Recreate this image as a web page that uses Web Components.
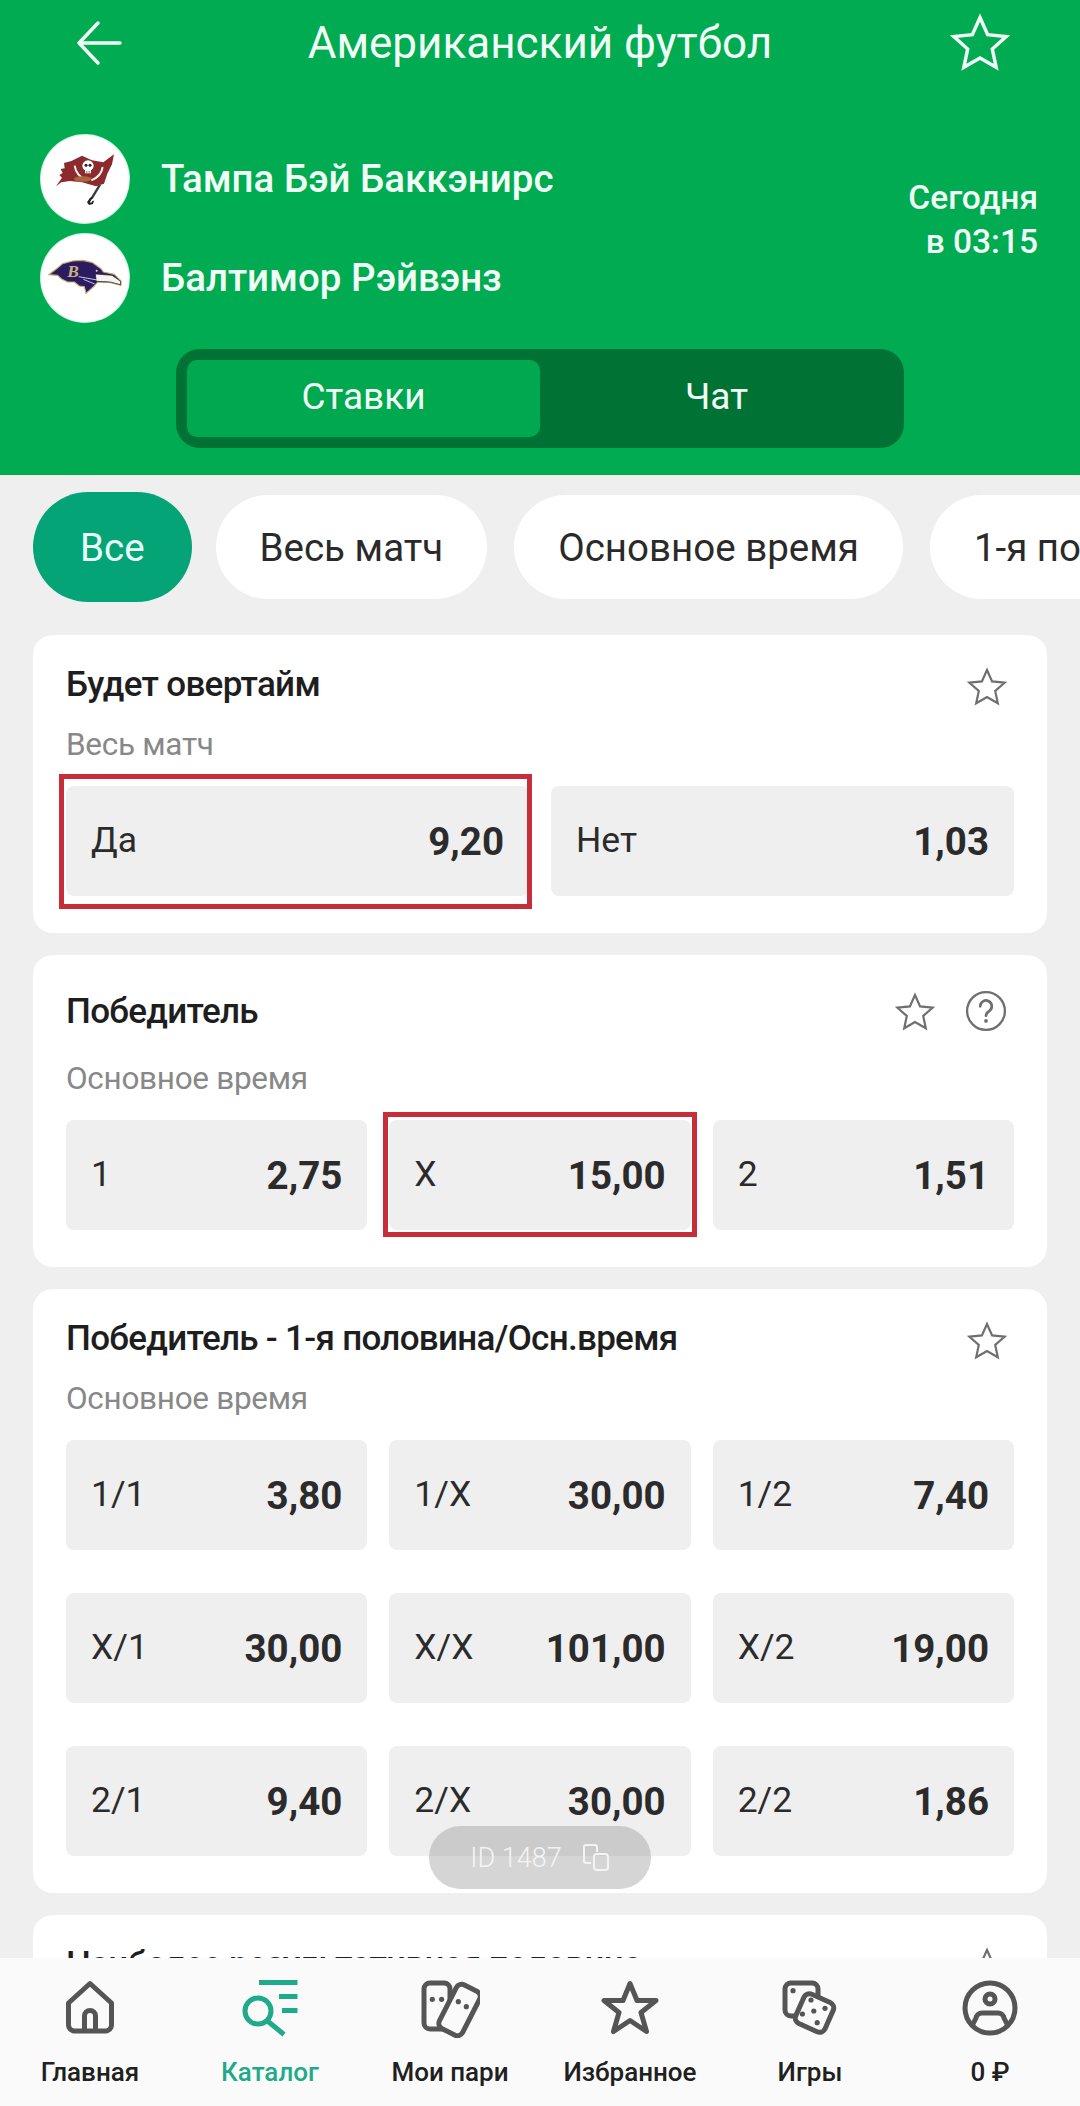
<!DOCTYPE html>
<html lang="ru">
<head>
<meta charset="utf-8">
<title>Американский футбол</title>
<style>
  html, body { margin: 0; padding: 0; }
  body {
    width: 1080px;
    height: 2106px;
    overflow: hidden;
    background: #efefef;
    font-family: Roboto, "Liberation Sans", sans-serif;
    color: #222;
  }
</style>
</head>
<body>

<app-shell>
  <match-header>
    <team-row name="Тампа Бэй Баккэнирс">
      <svg slot="logo" width="88" height="88" viewBox="5 14 264 264">
        <path d="M182 163L157 204" stroke="#3b3b3b" stroke-width="7" fill="none"/>
        <path d="M160 200l-8 2-9 14 6 8 12-3 3-10-4 0-5 7-3-3 8-12z" fill="#222"/>
        <path d="M50 168l18-26-8-8 10-6-6-12 12-2-2-16 22-6 32-16 30 14 34 6 32-24-6 30-14 28-10 30-24 8-42-12-36-4-26 4z" fill="#8c2a2e"/>
        <path d="M106 106q4 30 36 44M190 110q-4 28-34 40" stroke="#f4f0ea" stroke-width="6" fill="none"/>
        <ellipse cx="130" cy="146" rx="26" ry="8" fill="#a9673f"/>
        <ellipse cx="146" cy="106" rx="17" ry="16" fill="#fff"/>
        <rect x="137" y="118" width="18" height="11" fill="#fff"/>
        <circle cx="140" cy="105" r="4.500" fill="#222"/>
        <circle cx="152" cy="105" r="4.500" fill="#222"/>
        <path d="M141 122v7M146 122v7M151 122v7" stroke="#333" stroke-width="1.500"/>
      </svg>
    </team-row>
    <team-row name="Балтимор Рэйвэнз">
      <svg slot="logo" width="88" height="88" viewBox="5 14 264 264">
        <path d="M28 136l22-16 20-17 30-8 30-2 30 7 25 18 7 10 33 7 20 20v13l-30-8-40-2-10 12-25 22-5-20-15-2-15-12-20 0-17-8-13-12z" fill="#2b1b63" stroke="#c4a86c" stroke-width="3.500" stroke-linejoin="round"/>
        <path d="M168 134l50 4 26 18-1 10-30-8-42-2z" fill="#f4f4f4" stroke="#1a1a1a" stroke-width="2"/>
        <path d="M118 142l56 10M132 150l34 14" stroke="#e9e9f2" stroke-width="2.500" fill="none"/>
        <circle cx="172" cy="124" r="3" fill="#ddd"/>
        <text x="84" y="142" font-family="Liberation Serif, serif" font-style="italic" font-weight="700" font-size="52" fill="#c9b27c">B</text>
      </svg>
    </team-row>
  </match-header>

  <scroll-area>
    <filter-chips>
      <filter-chip active>Все</filter-chip>
      <filter-chip>Весь матч</filter-chip>
      <filter-chip>Основное время</filter-chip>
      <filter-chip>1-я половина</filter-chip>
    </filter-chips>

    <market-card title="Будет овертайм" sub="Весь матч" cols="2">
      <odd-button label="Да" value="9,20" marked style="--frame: -12px -3px -13px -7px"></odd-button>
      <odd-button label="Нет" value="1,03"></odd-button>
    </market-card>

    <market-card title="Победитель" sub="Основное время" cols="3" help>
      <odd-button label="1" value="2,75"></odd-button>
      <odd-button label="X" value="15,00" marked style="--frame: -8px -6px -7px -6px"></odd-button>
      <odd-button label="2" value="1,51"></odd-button>
    </market-card>

    <market-card title="Победитель - 1-я половина/Осн.время" sub="Основное время" cols="3">
      <odd-button label="1/1" value="3,80"></odd-button>
      <odd-button label="1/X" value="30,00"></odd-button>
      <odd-button label="1/2" value="7,40"></odd-button>
      <odd-button label="X/1" value="30,00"></odd-button>
      <odd-button label="X/X" value="101,00"></odd-button>
      <odd-button label="X/2" value="19,00"></odd-button>
      <odd-button label="2/1" value="9,40"></odd-button>
      <odd-button label="2/X" value="30,00"></odd-button>
      <odd-button label="2/2" value="1,86"></odd-button>
    </market-card>

    <market-card title="Наиболее результативная половина" sub="Основное время" cols="3"></market-card>

    <id-pill>ID 1487</id-pill>
  </scroll-area>

  <tab-bar>
    <tab-item>
      <svg slot="icon" viewBox="0 0 60 60"><path d="M30 5.500L51.500 25V47a6 6 0 0 1-6 6H14.500a6 6 0 0 1-6-6V25z"/><path d="M24.500 53V38a5.500 5.500 0 0 1 11 0V53"/></svg>
      Главная
    </tab-item>
    <tab-item active>
      <svg slot="icon" viewBox="0 0 60 60"><path d="M19 4.500H57.500M39 18.500H57.500M42 32.500H57.500"/><circle cx="18" cy="33" r="13"/><path d="M27.500 43L44 56.500"/></svg>
      Каталог
    </tab-item>
    <tab-item>
      <svg slot="icon" viewBox="0 0 60 60"><rect x="4" y="5" width="26" height="46" rx="6"/><rect x="26.500" y="7.500" width="26" height="49" rx="6" transform="rotate(27 39.500 32)" fill="#fafafa"/><g fill="#555" stroke="none"><circle cx="12.300" cy="21.300" r="2.600"/><circle cx="21.600" cy="21.300" r="2.600"/><circle cx="38.300" cy="23.700" r="2.600"/><circle cx="46.300" cy="28.700" r="2.600"/></g></svg>
      Мои пари
    </tab-item>
    <tab-item>
      <svg slot="icon" viewBox="0 0 60 60"><path d="M30 5.500L37 22.500H56L41 34.500L46.500 53.500L30 42.500L13.500 53.500L19 34.500L4 22.500H23z"/></svg>
      Избранное
    </tab-item>
    <tab-item>
      <svg slot="icon" viewBox="0 0 60 60"><rect x="5" y="5" width="33" height="33" rx="6"/><rect x="18.500" y="19" width="32" height="32" rx="6" transform="rotate(24 34.500 35)" fill="#fafafa"/><g fill="#555" stroke="none"><circle cx="13" cy="12.700" r="2.600"/><circle cx="31" cy="22" r="2.600"/><circle cx="45" cy="30.300" r="2.600"/><circle cx="33.800" cy="33" r="2.600"/><circle cx="22.400" cy="36" r="2.600"/><circle cx="37.200" cy="44.700" r="2.600"/></g></svg>
      Игры
    </tab-item>
    <tab-item>
      <svg slot="icon" viewBox="0 0 60 60"><circle cx="30" cy="30" r="25"/><circle cx="30" cy="21" r="5"/><path d="M12 48L16 40a6 6 0 0 1 6-5H38a6 6 0 0 1 6 5L48 48"/></svg>
      0 ₽
    </tab-item>
  </tab-bar>
</app-shell>

<script>
const starPath = 'M20 3l5.100 11.400 12.400 1.300-9.300 8.300 2.600 12.200L20 30l-10.800 6.200 2.600-12.200-9.300-8.300 12.400-1.300z'

class AppShell extends HTMLElement {
  constructor() {
    super()
    this.attachShadow({ mode: 'open' }).innerHTML = `
      <style>
        :host { display: flex; flex-direction: column; height: 2106px; }
      </style>
      <slot></slot>
    `
  }
}

class MatchHeader extends HTMLElement {
  constructor() {
    super()
    this.attachShadow({ mode: 'open' }).innerHTML = `
      <style>
        :host {
          display: block;
          flex: none;
          height: 475px;
          box-sizing: border-box;
          background: #00ab52;
          color: #f1fff6;
        }
        .top {
          display: grid;
          grid-template-columns: 1fr auto 1fr;
          align-items: center;
          height: 86px;
          padding: 0 70px;
        }
        .title { font-size: 44px; line-height: 86px; }
        .back { justify-self: start; display: block; margin-left: 6px; }
        .fav { justify-self: end; display: block; }
        .match {
          display: flex;
          justify-content: space-between;
          align-items: center;
          margin-top: 49px;
          padding: 0 42px 0 41px;
        }
        .teams { display: flex; flex-direction: column; gap: 11px; }
        .date {
          margin-top: -18px;
          font-size: 33.500px;
          font-weight: 500;
          line-height: 44px;
          text-align: right;
        }
        .seg {
          display: grid;
          grid-template-columns: 1fr 1fr;
          width: 728px;
          height: 99px;
          box-sizing: border-box;
          margin: 27px auto 0;
          padding: 11px;
          border-radius: 24px;
          background: #007234;
          font-size: 37px;
        }
        .seg div { display: flex; align-items: center; justify-content: center; padding-bottom: 4px; border-radius: 10px; }
        .seg .on { background: #00a850; }
      </style>
      <div class="top">
        <svg class="back" width="46" height="46" viewBox="0 0 46 46" fill="none" stroke="currentColor" stroke-width="3.500" stroke-linecap="round" stroke-linejoin="round"><path d="M44 23H3M22 3L3 23l19 20"/></svg>
        <div class="title">Американский футбол</div>
        <svg class="fav" width="60" height="60" viewBox="0 0 40 40" fill="none" stroke="currentColor" stroke-width="2.300" stroke-linejoin="miter"><path d="${starPath}"/></svg>
      </div>
      <div class="match">
        <div class="teams"><slot></slot></div>
        <div class="date">Сегодня<br>в 03:15</div>
      </div>
      <div class="seg">
        <div class="on">Ставки</div>
        <div>Чат</div>
      </div>
    `
  }
}

class TeamRow extends HTMLElement {
  constructor() {
    super()
    this.attachShadow({ mode: 'open' })
  }

  connectedCallback() {
    this.shadowRoot.innerHTML = `
      <style>
        :host { display: flex; align-items: center; gap: 32px; height: 88px; }
        .logo {
          width: 88px;
          height: 88px;
          border-radius: 50%;
          background: #fff;
          box-shadow: 0 0 0 1px #c9f3dc;
          overflow: hidden;
        }
        .name { font-size: 38.500px; font-weight: 500; margin-top: -1px; }
      </style>
      <div class="logo"><slot name="logo"></slot></div>
      <div class="name">${this.getAttribute('name')}</div>
    `
  }
}

class ScrollArea extends HTMLElement {
  constructor() {
    super()
    this.attachShadow({ mode: 'open' }).innerHTML = `
      <style>
        :host {
          display: flex;
          flex-direction: column;
          gap: 22px;
          flex: 1;
          min-height: 0;
          position: relative;
          overflow: hidden;
          padding: 0 33px;
        }
      </style>
      <slot></slot>
    `
  }
}

class FilterChips extends HTMLElement {
  constructor() {
    super()
    this.attachShadow({ mode: 'open' }).innerHTML = `
      <style>
        :host {
          display: flex;
          flex: none;
          align-items: center;
          gap: 27px;
          height: 110px;
          margin: 17px -33px 11px 0;
          white-space: nowrap;
        }
      </style>
      <slot></slot>
    `
  }
}

class FilterChip extends HTMLElement {
  constructor() {
    super()
    this.attachShadow({ mode: 'open' }).innerHTML = `
      <style>
        :host {
          display: flex;
          flex: none;
          align-items: center;
          height: 104px;
          padding: 0 44px;
          border-radius: 52px;
          background: #fff;
          font-size: 38.500px;
          color: #2a2a2a;
        }
        :host([active]) {
          height: 110px;
          margin-right: -3px;
          padding: 0 47px;
          border-radius: 55px;
          background: #05a477;
          color: #e8fff7;
        }
      </style>
      <slot></slot>
    `
  }
}

class MarketCard extends HTMLElement {
  constructor() {
    super()
    this.attachShadow({ mode: 'open' })
  }

  connectedCallback() {
    const help = this.hasAttribute('help')
    const icon = (size, body, cls = '') => `<svg class="${cls}" width="${size}" height="${size}" viewBox="0 0 40 40" fill="none" stroke="#6f6f6f" stroke-width="2.200">${body}</svg>`
    this.shadowRoot.innerHTML = `
      <style>
        :host {
          display: block;
          flex: none;
          padding: 24px 33px 37px;
          border-radius: 20px;
          background: #fff;
        }
        .head {
          display: flex;
          align-items: center;
          justify-content: space-between;
          height: ${help ? 64 : 50}px;
        }
        .title { font-size: 35px; font-weight: 500; letter-spacing: -0.700px; color: #1e1e1e; }
        .icons { display: flex; align-items: center; gap: 30px; margin-right: 7px; }
        .icons svg { display: block; }
        .icons .star { margin-top: ${help ? 2 : 5}px; }
        .sub { margin-top: 18px; height: 36px; line-height: 36px; font-size: 31.500px; color: #888; letter-spacing: -0.300px; }
        .grid {
          display: grid;
          grid-template-columns: repeat(${this.getAttribute('cols')}, 1fr);
          column-gap: 22px;
          row-gap: 43px;
          margin-top: 23px;
        }
      </style>
      <div class="head">
        <div class="title">${this.getAttribute('title')}</div>
        <div class="icons">
          ${icon(40, `<path d="${starPath}"/>`, 'star')}
          ${help ? icon(42, `<circle cx="20" cy="20" r="18"/><path d="M14.500 15.500a5.500 5.500 0 1 1 8.500 4.600c-2 1.300-3 2.300-3 4.400" stroke-linecap="round" stroke-width="2.600"/><circle cx="20" cy="29.500" r="1.800" fill="#6f6f6f" stroke="none"/>`) : ''}
        </div>
      </div>
      <div class="sub">${this.getAttribute('sub')}</div>
      <div class="grid"><slot></slot></div>
    `
  }
}

class OddButton extends HTMLElement {
  constructor() {
    super()
    this.attachShadow({ mode: 'open' })
  }

  connectedCallback() {
    this.shadowRoot.innerHTML = `
      <style>
        :host {
          display: flex;
          align-items: center;
          justify-content: space-between;
          position: relative;
          height: 110px;
          padding: 0 25px;
          border-radius: 8px;
          background: #efefef;
          color: #2b2b2b;
        }
        .label { font-size: 35.500px; margin-top: -3px; }
        .value { font-size: 38.500px; font-weight: 700; margin-top: 1px; }
        /* red frame that sits on top of the marked odds */
        :host([marked])::after {
          content: "";
          position: absolute;
          inset: var(--frame);
          border: 5px solid #c62f39;
          pointer-events: none;
        }
      </style>
      <span class="label">${this.getAttribute('label')}</span>
      <span class="value">${this.getAttribute('value')}</span>
    `
  }
}

class IdPill extends HTMLElement {
  constructor() {
    super()
    this.attachShadow({ mode: 'open' }).innerHTML = `
      <style>
        :host {
          display: flex;
          align-items: center;
          justify-content: center;
          gap: 20px;
          position: absolute;
          left: 429px;
          top: 1351px;
          width: 222px;
          height: 63px;
          border-radius: 32px;
          background: rgba(150, 150, 150, 0.4);
          color: #f4f4f4;
          font-size: 27px;
          font-weight: 300;
        }
        svg { display: block; }
      </style>
      <slot></slot>
      <svg width="28" height="28" viewBox="0 0 28 28" fill="none" stroke="currentColor" stroke-width="2"><path d="M9 19H4a2 2 0 0 1-2-2V3a2 2 0 0 1 2-2h9a2 2 0 0 1 2 2v5"/><rect x="12" y="10" width="14" height="16" rx="3"/></svg>
    `
  }
}

class TabBar extends HTMLElement {
  constructor() {
    super()
    this.attachShadow({ mode: 'open' }).innerHTML = `
      <style>
        :host {
          display: grid;
          grid-template-columns: repeat(6, 1fr);
          flex: none;
          height: 148px;
          position: relative;
          background: #fafafa;
        }
      </style>
      <slot></slot>
    `
  }
}

class TabItem extends HTMLElement {
  constructor() {
    super()
    this.attachShadow({ mode: 'open' }).innerHTML = `
      <style>
        :host {
          display: flex;
          flex-direction: column;
          align-items: center;
          padding-top: 20px;
          font-size: 26px;
          font-weight: 500;
          white-space: nowrap;
          color: #202020;
          --tab-stroke: #555;
        }
        :host([active]) { color: #1fab89; --tab-stroke: #1fab89; }
        .icon { height: 60px; margin-bottom: 19px; }
        ::slotted(svg) { display: block; width: 60px; height: 60px; fill: none; stroke: var(--tab-stroke); stroke-width: 5; stroke-linejoin: round; }
      </style>
      <div class="icon"><slot name="icon"></slot></div>
      <slot></slot>
    `
  }
}

customElements.define('app-shell', AppShell)
customElements.define('match-header', MatchHeader)
customElements.define('team-row', TeamRow)
customElements.define('scroll-area', ScrollArea)
customElements.define('filter-chips', FilterChips)
customElements.define('filter-chip', FilterChip)
customElements.define('market-card', MarketCard)
customElements.define('odd-button', OddButton)
customElements.define('id-pill', IdPill)
customElements.define('tab-bar', TabBar)
customElements.define('tab-item', TabItem)
</script>
</body>
</html>
